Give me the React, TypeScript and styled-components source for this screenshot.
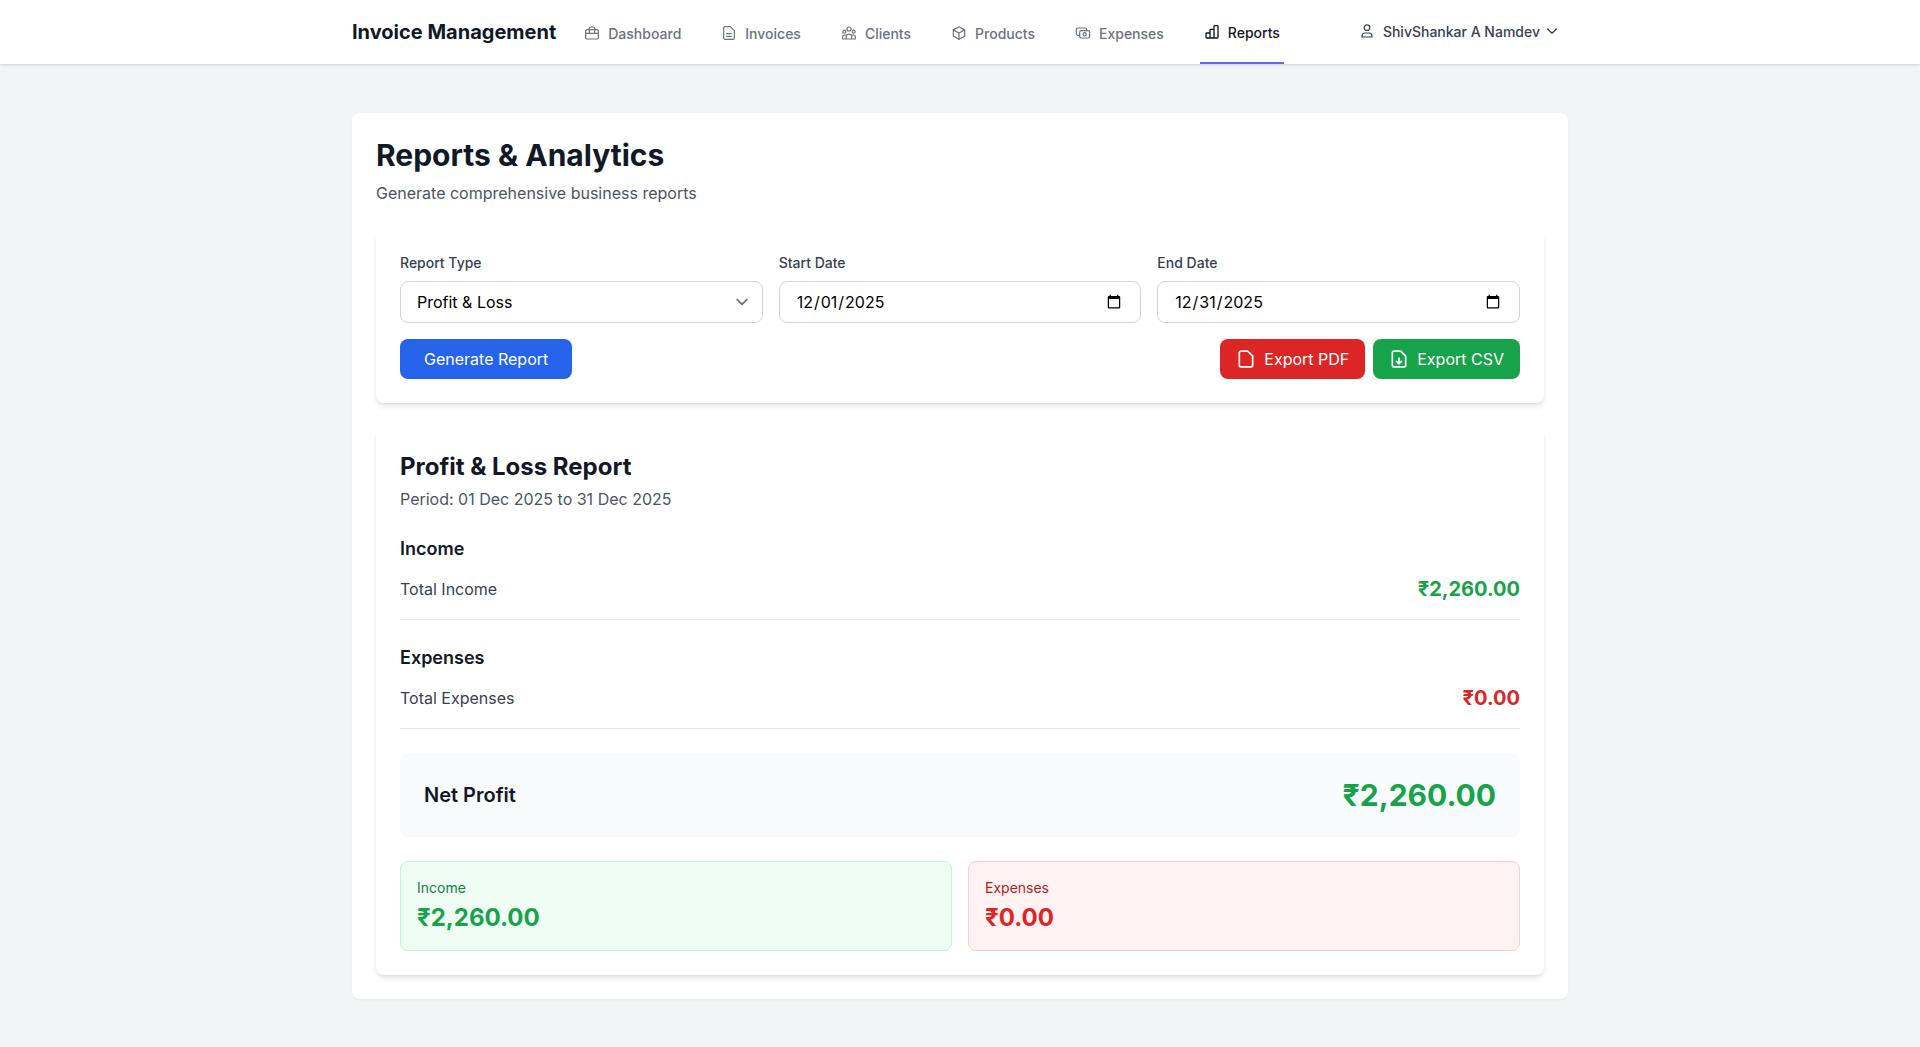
import type { ReactNode } from 'react';
import styled, { createGlobalStyle } from 'styled-components';

const GlobalStyle = createGlobalStyle`
  * {
    box-sizing: border-box;
  }

  body {
    margin: 0;
    background: #f3f4f6;
    color: #111827;
    font-family: Inter, "Noto Sans", sans-serif;
  }
`;

const Svg = styled.svg`
  flex: none;
  fill: none;
  stroke: currentColor;
  stroke-linecap: round;
  stroke-linejoin: round;
`;

const Icon = ({ size = 16, width = 1.8, children }: { size?: number; width?: number; children: ReactNode }) => (
  <Svg width={size} height={size} viewBox="0 0 24 24" strokeWidth={width}>
    {children}
  </Svg>
);

const DOC = 'M6 2.5h8L20 8.5V19.5a2 2 0 0 1-2 2H6a2 2 0 0 1-2-2V4.5a2 2 0 0 1 2-2z';

const BriefcaseIcon = () => (
  <Icon>
    <rect x="2.5" y="7" width="19" height="14" rx="2" />
    <path d="M8 12V5a2 2 0 0 1 2-2h4a2 2 0 0 1 2 2v7M2.5 12.5h19" />
  </Icon>
);

const InvoiceIcon = () => (
  <Icon>
    <path d={DOC} />
    <path d="M8.5 13h7M8.5 17h7" />
  </Icon>
);

const ClientsIcon = () => (
  <Icon>
    <circle cx="12" cy="6" r="3" />
    <circle cx="5" cy="10" r="2.2" />
    <circle cx="19" cy="10" r="2.2" />
    <path d="M8 21v-4a3 3 0 0 1 3-3h2a3 3 0 0 1 3 3v4zM8 21H2.5v-3a3 3 0 0 1 3-3H8M16 21h5.5v-3a3 3 0 0 0-3-3H16" />
  </Icon>
);

const CubeIcon = () => (
  <Icon>
    <path d="M12 2.5l8.5 4.8v9.4L12 21.5l-8.5-4.8V7.3z" />
    <path d="M3.5 7.3L12 12l8.5-4.7M12 12v9.5" />
  </Icon>
);

const CashIcon = () => (
  <Icon>
    <rect x="7" y="8.5" width="15" height="11" rx="2.5" />
    <circle cx="14.5" cy="14" r="2.5" />
    <path d="M17.5 8.5V7a2.5 2.5 0 0 0-2.5-2.5H4.5A2.5 2.5 0 0 0 2 7v6a2.5 2.5 0 0 0 2.5 2.5H7" />
  </Icon>
);

const ChartIcon = () => (
  <Icon width={2}>
    <path d="M3 14.5a1 1 0 0 1 1-1h5V21H4a1 1 0 0 1-1-1zM9 21V9a1 1 0 0 1 1-1h5v13zM15 21V3.5a1 1 0 0 1 1-1h4a1 1 0 0 1 1 1V20a1 1 0 0 1-1 1z" />
  </Icon>
);

const UserIcon = () => (
  <Icon>
    <circle cx="12" cy="7" r="4.2" />
    <path d="M4.5 21v-1.5a4.5 4.5 0 0 1 4.5-4.5h6a4.5 4.5 0 0 1 4.5 4.5V21z" />
  </Icon>
);

const ChevronIcon = () => (
  <Icon width={2}>
    <path d="M5.5 9l6.5 6.5L18.5 9" />
  </Icon>
);

const FileIcon = () => (
  <Icon size={20} width={2}>
    <path d={DOC} />
  </Icon>
);

const FileDownIcon = () => (
  <Icon size={20} width={2}>
    <path d={DOC} />
    <path d="M12 11v6.5M9 14.8l3 3 3-3" />
  </Icon>
);

const Nav = styled.nav`
  height: 64px;
  background: #fff;
  box-shadow: 0 1px 3px rgba(0, 0, 0, 0.1), 0 1px 2px rgba(0, 0, 0, 0.06);
`;

const NavInner = styled.div`
  width: 1216px;
  height: 64px;
  margin: 0 auto;
  display: flex;
  align-items: stretch;
`;

const Brand = styled.div`
  display: flex;
  align-items: center;
  font-size: 20px;
  font-weight: 700;
  color: #111827;
  margin-right: 24px;
  padding-bottom: 1px;
`;

const NavLinks = styled.div`
  display: flex;
  gap: 32px;
`;

const NavLink = styled.a<{ $active?: boolean }>`
  display: flex;
  align-items: center;
  gap: 8px;
  padding: 2px 4px 0;
  font-size: 14px;
  font-weight: 500;
  color: ${(p) => (p.$active ? '#111827' : '#6b7280')};
  border-bottom: ${(p) => (p.$active ? '2px solid #6366f1' : '0')};
`;

const UserMenu = styled.div`
  margin-left: auto;
  display: flex;
  align-items: center;
  padding: 0 8px 2px 0;
  font-size: 14px;
  font-weight: 500;
  color: #374151;

  svg:first-child {
    margin-right: 8px;
  }

  svg:last-child {
    margin-left: 4px;
  }
`;

const Main = styled.main`
  width: 1216px;
  margin: 0 auto;
  padding: 49px 0 48px;
`;

const Panel = styled.div`
  background: #fff;
  border-radius: 8px;
  padding: 24px;
  box-shadow: 0 1px 2px rgba(0, 0, 0, 0.05);
`;

const Title = styled.h1`
  margin: 0;
  font-size: 30px;
  line-height: 36px;
  font-weight: 700;
  color: #111827;
`;

const Subtitle = styled.p`
  margin: 8px 0 24px;
  font-size: 16px;
  line-height: 24px;
  color: #4b5563;
`;

const Card = styled.section`
  background: #fff;
  border-radius: 8px;
  padding: 24px;
  margin-bottom: 24px;
  box-shadow: 0 4px 6px -1px rgba(0, 0, 0, 0.1), 0 2px 4px -2px rgba(0, 0, 0, 0.1);

  &:last-child {
    margin-bottom: 0;
  }
`;

const FieldGrid = styled.div`
  display: grid;
  grid-template-columns: repeat(3, 1fr);
  gap: 16px;
  margin-bottom: 16px;
`;

const Field = styled.label`
  display: block;
`;

const FieldLabel = styled.span`
  display: block;
  margin-bottom: 8px;
  font-size: 14px;
  line-height: 20px;
  font-weight: 500;
  color: #374151;
`;

const controlStyles = `
  display: block;
  width: 100%;
  height: 42px;
  padding: 8px 16px;
  border: 1px solid #d1d5db;
  border-radius: 8px;
  background-color: #fff;
  font-family: Inter, "Noto Sans", sans-serif;
  font-size: 16px;
  color: #000;
  outline: none;
`;

const Select = styled.select`
  ${controlStyles}
  appearance: none;
  background-image: url("data:image/svg+xml,%3csvg xmlns='http://www.w3.org/2000/svg' fill='none' viewBox='0 0 20 20'%3e%3cpath stroke='%236b7280' stroke-linecap='round' stroke-linejoin='round' stroke-width='1.5' d='M6 8l4 4 4-4'/%3e%3c/svg%3e");
  background-position: right 8px center;
  background-repeat: no-repeat;
  background-size: 24px 24px;
`;

const DateInput = styled.input`
  ${controlStyles}
`;

const Actions = styled.div`
  display: flex;
  align-items: center;
`;

const ExportGroup = styled.div`
  margin-left: auto;
  display: flex;
  gap: 8px;
`;

const Button = styled.button<{ $color: string; $wide?: boolean }>`
  display: flex;
  align-items: center;
  gap: 8px;
  height: 40px;
  padding: 0 ${(p) => (p.$wide ? '24px' : '16px')};
  border: 0;
  border-radius: 8px;
  background: ${(p) => p.$color};
  color: #fff;
  font-family: Inter, "Noto Sans", sans-serif;
  font-size: 16px;
  font-weight: 400;
`;

const ReportTitle = styled.h2`
  margin: 0 0 4px;
  font-size: 24px;
  line-height: 32px;
  font-weight: 700;
  color: #111827;
`;

const Period = styled.p`
  margin: 0 0 24px;
  font-size: 16px;
  line-height: 24px;
  color: #4b5563;
`;

const SectionBlock = styled.div`
  margin-bottom: 24px;
`;

const SectionTitle = styled.h3`
  margin: 0 0 12px;
  font-size: 18px;
  line-height: 28px;
  font-weight: 600;
  color: #111827;
`;

const Row = styled.div`
  display: flex;
  justify-content: space-between;
  align-items: center;
  padding-bottom: 16px;
  border-bottom: 1px solid #e5e7eb;
`;

const RowLabel = styled.span`
  font-size: 16px;
  line-height: 24px;
  color: #374151;
`;

const Amount = styled.span<{ $color: string }>`
  font-size: 20px;
  line-height: 28px;
  font-weight: 700;
  color: ${(p) => p.$color};
`;

const NetBox = styled.div`
  display: flex;
  justify-content: space-between;
  align-items: center;
  padding: 24px;
  margin-bottom: 24px;
  border-radius: 8px;
  background: #f9fafb;
`;

const NetLabel = styled.span`
  font-size: 20px;
  line-height: 28px;
  font-weight: 600;
  color: #111827;
`;

const NetAmount = styled.span`
  font-size: 30px;
  line-height: 36px;
  font-weight: 700;
  color: #16a34a;
`;

const SummaryGrid = styled.div`
  display: grid;
  grid-template-columns: repeat(2, 1fr);
  gap: 16px;
`;

const SummaryCard = styled.div<{ $bg: string; $border: string }>`
  padding: 16px;
  border: 1px solid ${(p) => p.$border};
  border-radius: 8px;
  background: ${(p) => p.$bg};
`;

const SummaryLabel = styled.div<{ $color: string }>`
  margin-bottom: 4px;
  font-size: 14px;
  line-height: 20px;
  color: ${(p) => p.$color};
`;

const SummaryValue = styled.div<{ $color: string }>`
  font-size: 24px;
  line-height: 32px;
  font-weight: 700;
  color: ${(p) => p.$color};
`;

const links = [
  { label: 'Dashboard', icon: BriefcaseIcon },
  { label: 'Invoices', icon: InvoiceIcon },
  { label: 'Clients', icon: ClientsIcon },
  { label: 'Products', icon: CubeIcon },
  { label: 'Expenses', icon: CashIcon },
  { label: 'Reports', icon: ChartIcon, active: true },
];

const App = () => (
  <>
    <GlobalStyle />
    <Nav>
      <NavInner>
        <Brand>Invoice Management</Brand>
        <NavLinks>
          {links.map(({ label, icon: LinkIcon, active }) => (
            <NavLink key={label} $active={active}>
              <LinkIcon />
              {label}
            </NavLink>
          ))}
        </NavLinks>
        <UserMenu>
          <UserIcon />
          ShivShankar A Namdev
          <ChevronIcon />
        </UserMenu>
      </NavInner>
    </Nav>
    <Main>
      <Panel>
        <Title>Reports &amp; Analytics</Title>
        <Subtitle>Generate comprehensive business reports</Subtitle>
        <Card>
          <FieldGrid>
            <Field>
              <FieldLabel>Report Type</FieldLabel>
              <Select defaultValue="pl">
                <option value="pl">Profit &amp; Loss</option>
              </Select>
            </Field>
            <Field>
              <FieldLabel>Start Date</FieldLabel>
              <DateInput type="date" defaultValue="2025-12-01" />
            </Field>
            <Field>
              <FieldLabel>End Date</FieldLabel>
              <DateInput type="date" defaultValue="2025-12-31" />
            </Field>
          </FieldGrid>
          <Actions>
            <Button $color="#2563eb" $wide>Generate Report</Button>
            <ExportGroup>
              <Button $color="#dc2626"><FileIcon />Export PDF</Button>
              <Button $color="#16a34a"><FileDownIcon />Export CSV</Button>
            </ExportGroup>
          </Actions>
        </Card>
        <Card>
          <ReportTitle>Profit &amp; Loss Report</ReportTitle>
          <Period>Period: 01 Dec 2025 to 31 Dec 2025</Period>
          <SectionBlock>
            <SectionTitle>Income</SectionTitle>
            <Row>
              <RowLabel>Total Income</RowLabel>
              <Amount $color="#16a34a">₹2,260.00</Amount>
            </Row>
          </SectionBlock>
          <SectionBlock>
            <SectionTitle>Expenses</SectionTitle>
            <Row>
              <RowLabel>Total Expenses</RowLabel>
              <Amount $color="#dc2626">₹0.00</Amount>
            </Row>
          </SectionBlock>
          <NetBox>
            <NetLabel>Net Profit</NetLabel>
            <NetAmount>₹2,260.00</NetAmount>
          </NetBox>
          <SummaryGrid>
            <SummaryCard $bg="#f0fdf4" $border="#bbf7d0">
              <SummaryLabel $color="#15803d">Income</SummaryLabel>
              <SummaryValue $color="#16a34a">₹2,260.00</SummaryValue>
            </SummaryCard>
            <SummaryCard $bg="#fef2f2" $border="#fecaca">
              <SummaryLabel $color="#b91c1c">Expenses</SummaryLabel>
              <SummaryValue $color="#dc2626">₹0.00</SummaryValue>
            </SummaryCard>
          </SummaryGrid>
        </Card>
      </Panel>
    </Main>
  </>
);

export default App;
